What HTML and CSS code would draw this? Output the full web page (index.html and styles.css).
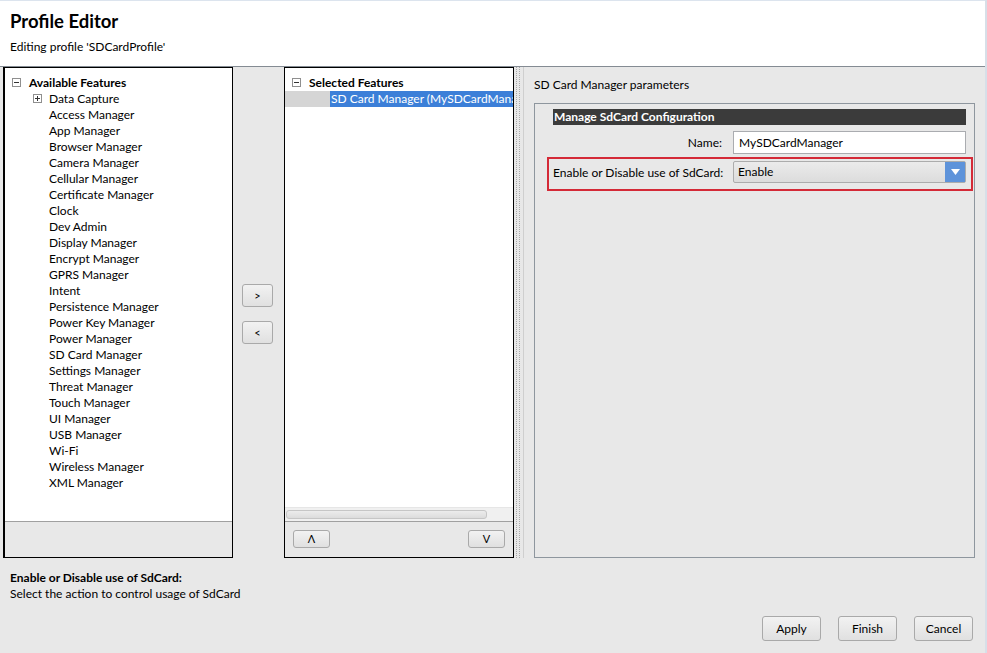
FILE: index.html
```html
<!DOCTYPE html>
<html>
<head>
<meta charset="utf-8">
<title>Profile Editor</title>
<link rel="stylesheet" href="styles.css">
</head>
<body>
<div class="window">
  <header class="header">
    <h1 class="title">Profile Editor</h1>
    <div class="subtitle">Editing profile 'SDCardProfile'</div>
  </header>

  <div class="main">
    <section class="panel panel-left">
      <div class="tree">
        <div class="row root"><span class="exp minus"></span><span class="label bold">Available Features</span></div>
        <div class="row child"><span class="exp plus"></span><span class="label">Data Capture</span></div>
        <div class="row leaf"><span class="label">Access Manager</span></div>
        <div class="row leaf"><span class="label">App Manager</span></div>
        <div class="row leaf"><span class="label">Browser Manager</span></div>
        <div class="row leaf"><span class="label">Camera Manager</span></div>
        <div class="row leaf"><span class="label">Cellular Manager</span></div>
        <div class="row leaf"><span class="label">Certificate Manager</span></div>
        <div class="row leaf"><span class="label">Clock</span></div>
        <div class="row leaf"><span class="label">Dev Admin</span></div>
        <div class="row leaf"><span class="label">Display Manager</span></div>
        <div class="row leaf"><span class="label">Encrypt Manager</span></div>
        <div class="row leaf"><span class="label">GPRS Manager</span></div>
        <div class="row leaf"><span class="label">Intent</span></div>
        <div class="row leaf"><span class="label">Persistence Manager</span></div>
        <div class="row leaf"><span class="label">Power Key Manager</span></div>
        <div class="row leaf"><span class="label">Power Manager</span></div>
        <div class="row leaf"><span class="label">SD Card Manager</span></div>
        <div class="row leaf"><span class="label">Settings Manager</span></div>
        <div class="row leaf"><span class="label">Threat Manager</span></div>
        <div class="row leaf"><span class="label">Touch Manager</span></div>
        <div class="row leaf"><span class="label">UI Manager</span></div>
        <div class="row leaf"><span class="label">USB Manager</span></div>
        <div class="row leaf"><span class="label">Wi-Fi</span></div>
        <div class="row leaf"><span class="label">Wireless Manager</span></div>
        <div class="row leaf"><span class="label">XML Manager</span></div>
      </div>
      <div class="panel-foot"></div>
    </section>

    <div class="move-col">
      <button class="btn small">&gt;</button>
      <button class="btn small">&lt;</button>
    </div>

    <section class="panel panel-mid">
      <div class="tree tree-mid">
        <div class="row root"><span class="exp minus"></span><span class="label bold">Selected Features</span></div>
        <div class="row selrow"><span class="selpad"></span><span class="sel">SD Card Manager (MySDCardMana</span></div>
        <div class="spacer"></div>
        <div class="hscroll"><div class="thumb"></div></div>
      </div>
      <div class="panel-foot order">
        <button class="btn order-btn">&#923;</button>
        <button class="btn order-btn">V</button>
      </div>
    </section>

    <div class="splitter"><div class="dots"></div></div>

    <section class="params">
      <div class="params-title">SD Card Manager parameters</div>
      <div class="group">
        <div class="group-head">Manage SdCard Configuration</div>
        <div class="field">
          <label class="flabel right">Name:</label>
          <div class="input">MySDCardManager</div>
        </div>
        <div class="field highlight">
          <label class="flabel">Enable or Disable use of SdCard:</label>
          <div class="select">
            <span class="select-val">Enable</span>
            <span class="select-btn"><svg width="9" height="6" viewBox="0 0 9 6"><path d="M0 0H9L4.5 6Z" fill="#fff"/></svg></span>
          </div>
        </div>
      </div>
    </section>
  </div>

  <footer class="footer">
    <div class="help">
      <div class="help-title">Enable or Disable use of SdCard:</div>
      <div class="help-text">Select the action to control usage of SdCard</div>
    </div>
    <div class="actions">
      <button class="btn action">Apply</button>
      <button class="btn action">Finish</button>
      <button class="btn action">Cancel</button>
    </div>
  </footer>
</div>
</body>
</html>
```

FILE: styles.css
```css
* { box-sizing: border-box; }
html, body { margin: 0; padding: 0; }
body {
  width: 987px;
  height: 653px;
  overflow: hidden;
  background: #e8e8e8;
  font-family: Lato, "Open Sans", sans-serif;
  font-size: 12px;
  color: #000;
}
.window {
  width: 987px;
  height: 653px;
  display: flex;
  flex-direction: column;
  border-right: 2px solid #d7dfe8;
}
.header {
  height: 67px;
  background: #fff;
  border-top: 1px solid #dce4ee;
  border-bottom: 1px solid #848b93;
  padding: 8px 0 0 10px;
}
.title {
  margin: 0;
  font-size: 18.5px;
  font-weight: 700;
  line-height: 24px;
}
.subtitle {
  margin-top: 6px;
  line-height: 16px;
}
.main {
  height: 491px;
  display: flex;
  padding-left: 3px;
}
.panel {
  width: 230px;
  height: 491px;
  border: 1px solid #000;
  display: flex;
  flex-direction: column;
}
.panel-left { border-left-width: 2px; }
.tree {
  background: #fff;
  height: 454px;
  border-bottom: 1px solid #a0a0a0;
  padding-top: 6px;
  overflow: hidden;
  display: flex;
  flex-direction: column;
}
.panel-foot { flex: 1; }
.row {
  height: 16px;
  display: flex;
  align-items: center;
  white-space: nowrap;
}
.root { padding-left: 7px; }
.child { padding-left: 28px; }
.child .exp { margin-right: 7px; }
.leaf { padding-left: 44px; }
.bold { font-weight: 700; }
.exp {
  width: 9px;
  height: 9px;
  border: 1px solid #8f8f8f;
  position: relative;
  margin-right: 8px;
  flex: none;
  background: #fff;
}
.exp::before {
  content: "";
  position: absolute;
  left: 1px; right: 1px; top: 3px;
  height: 1px;
  background: #333;
}
.plus::after {
  content: "";
  position: absolute;
  top: 1px; bottom: 1px; left: 3px;
  width: 1px;
  background: #333;
}
.move-col {
  width: 51px;
  display: flex;
  flex-direction: column;
  align-items: center;
  justify-content: center;
  gap: 14px;
  padding-right: 2px;
  padding-top: 2px;
}
.btn {
  font-family: Lato, "Open Sans", sans-serif;
  font-size: 12px;
  color: #000;
  background: linear-gradient(#f2f2f2, #e0e0e0);
  border: 1px solid #a9a9a9;
  border-radius: 3px;
  padding: 0;
  margin: 0;
}
.small { width: 31px; height: 23px; font-size: 11px; }
.selrow { height: 16px; margin-top: 1px; }
.selpad {
  width: 45px;
  height: 16px;
  background: #d5d5d5;
  flex: none;
}
.sel {
  flex: 1;
  background: #3c7fd8;
  color: #fff;
  height: 16px;
  line-height: 16px;
  overflow: hidden;
  white-space: nowrap;
  padding-left: 1px;
}
.spacer { flex: 1; }
.hscroll {
  height: 14px;
  background: #f0f0f0;
  border-top: 1px solid #e6e6e6;
  padding: 2px 1px;
}
.thumb {
  width: 201px;
  height: 9px;
  border: 1px solid #c6c6c6;
  border-radius: 3px;
  background: linear-gradient(#ececec, #dcdcdc);
}
.order {
  display: flex;
  justify-content: space-between;
  align-items: center;
  padding: 0 8px 2px 8px;
}
.order-btn { width: 37px; height: 18px; font-size: 11px; line-height: 14px; }
.splitter {
  width: 9px;
  display: flex;
  padding-left: 2px;
}
.dots {
  width: 4px;
  height: 100%;
  background-image:
    linear-gradient(90deg, transparent 1px, #e8e8e8 1px, #e8e8e8 3px, transparent 3px),
    repeating-linear-gradient(180deg, #a8a8a8 0 1px, transparent 1px 2px);
}
.params {
  flex: 1;
  border-left: 1px solid #cfcfcf;
  padding: 10px 10px 0 10px;
  display: flex;
  flex-direction: column;
}
.params-title { line-height: 16px; height: 26px; }
.group {
  flex: 1;
  border: 1px solid #8e969e;
  padding: 5px 8px 0 18px;
}
.group-head {
  background: #3b3b3b;
  color: #fff;
  font-weight: 700;
  height: 16px;
  line-height: 16px;
  padding-left: 1px;
}
.field {
  display: flex;
  align-items: center;
  margin-top: 6px;
}
.flabel {
  width: 169px;
  margin-right: 11px;
  flex: none;
  white-space: nowrap;
}
.right { text-align: right; }
.input {
  width: 233px;
  height: 23px;
  background: #fff;
  border: 1px solid #aaacb0;
  line-height: 21px;
  padding-left: 5px;
}
.highlight {
  margin: 3px -7px 0 -6px;
  border: 2px solid #d42a37;
  padding: 2px 5px 6px 4px;
}
.select {
  width: 233px;
  height: 22px;
  border: 1px solid #acacac;
  border-radius: 2px;
  background: linear-gradient(#ebebeb, #dcdcdc);
  display: flex;
  align-items: stretch;
}
.select-val { flex: 1; line-height: 20px; padding-left: 4px; }
.select-btn {
  width: 20px;
  background: #5e93da;
  display: flex;
  align-items: center;
  justify-content: center;
}
.footer {
  flex: 1;
  display: flex;
  flex-direction: column;
  padding: 12px 12px 0 10px;
}
.help { line-height: 16px; }
.help-title { font-weight: 700; }
.actions {
  display: flex;
  justify-content: flex-end;
  gap: 17px;
  margin-top: 14px;
}
.action { width: 59px; height: 25px; font-size: 12px; }
```
